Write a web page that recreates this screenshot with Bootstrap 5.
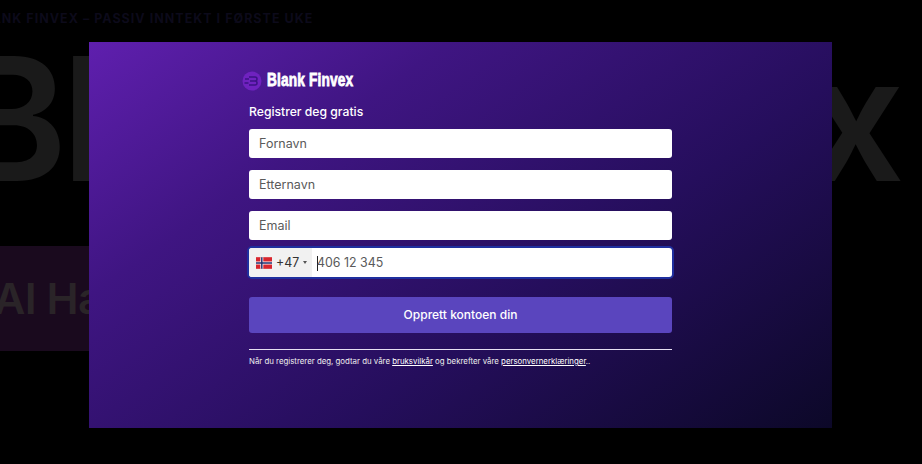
<!DOCTYPE html>
<html lang="no">
<head>
<meta charset="utf-8">
<title>Blank Finvex</title>
<link href="https://cdn.jsdelivr.net/npm/bootstrap@5.3.0/dist/css/bootstrap.min.css" rel="stylesheet">
<style>
html,body{height:100%;margin:0;background:#000;overflow:hidden;font-family:Inter,"Liberation Sans",sans-serif}
.page-bg{height:464px;overflow:hidden;white-space:nowrap}
.top-line{font-size:12.5px;font-weight:700;letter-spacing:1.02px;color:#0c0a1a;margin-left:-26px;padding-top:11px;line-height:16px}
.huge-word{font-size:172px;font-weight:600;line-height:150px;color:#1a1a1a;letter-spacing:-6px;word-spacing:-29px;margin-left:-46px;margin-top:16px;width:1000px}
.promo-band{margin-top:53px;height:105px;width:100px;background:#1a0a1e;color:#2a2428;font-size:43px;font-weight:600;line-height:105px;margin-left:-6px;padding-left:0;letter-spacing:-.5px}
.overlay{position:absolute;inset:0;display:flex;align-items:flex-start;justify-content:center;padding-top:42px}
.reg-modal{width:743px;height:386px;background:linear-gradient(145deg,#5f1fae 0%,#3f1582 28%,#250e5c 62%,#0c0828 100%);margin-right:1px}
.reg-form{width:423px;margin-left:160px;padding-top:29px}
.brand-row{height:19px;gap:5px;margin-left:-7px}
.brand-name{font-family:"Liberation Sans",sans-serif;font-weight:700;font-size:18px;line-height:19px;color:#fff;-webkit-text-stroke:.8px #fff;display:inline-block;transform:scaleX(.76);transform-origin:left center;letter-spacing:.2px;white-space:nowrap}
.reg-title{color:#fff;font-size:12.2px;font-weight:500;line-height:16px;margin:14px 0 9px}
.reg-field.form-control{height:29px;padding:0 10px;border:0;border-radius:3px;font-size:12.5px;color:#555;background:#fff;margin-bottom:12px}
.reg-field::placeholder{color:#5a5a5a;opacity:1}
.phone-box{height:29px;margin-top:-4px;background:#fff;border-radius:3px;box-shadow:0 0 0 2px #1f2f9e;font-size:12.4px;color:#5a5a5a}
.dial-code{background:#f1f1f1;width:63px;padding-left:7px;gap:4px;color:#333;border-radius:3px 0 0 3px}
.dial-num{padding-top:2px}
.caret-mark{border-left:2.5px solid transparent;border-right:2.5px solid transparent;border-top:3px solid #555}
.phone-hint{padding-left:5px;padding-top:2px}
.cursor-bar{width:1px;height:15px;background:#222;margin-right:-1px}
.submit-btn.btn{height:36px;margin-top:20px;background:#5a45be;border:0;border-radius:3px;color:#fff;font-size:12px;font-weight:500;padding:0}
.rule-line{height:1px;background:#e6e0f2;margin-top:16px}
.terms-text{color:#eee;font-size:7.85px;line-height:10px;margin-top:6px}
.terms-text a{color:#fff}
</style>
</head>
<body>
<div class="page-bg">
  <div class="top-line">BLANK FINVEX – PASSIV INNTEKT I FØRSTE UKE</div>
  <div class="huge-word">Blank Finvex</div>
  <div class="promo-band">AI Ha</div>
</div>
<div class="overlay">
  <div class="reg-modal">
    <form class="reg-form">
      <div class="brand-row d-flex align-items-center">
        <svg width="20" height="20" viewBox="0 0 20 20" aria-hidden="true"><circle cx="10" cy="10" r="9.500" fill="#6f22bf"/><path d="M7 6h6a2 2 0 0 1 0 4H8m5 0a2 2 0 0 1 0 4H7M3 8h4M2.500 12h4" fill="none" stroke="#3d1285" stroke-width="1.500"/></svg>
        <span class="brand-name">Blank Finvex</span>
      </div>
      <div class="reg-title">Registrer deg gratis</div>
      <input class="form-control reg-field" placeholder="Fornavn">
      <input class="form-control reg-field" placeholder="Etternavn">
      <input class="form-control reg-field" placeholder="Email">
      <div class="phone-box d-flex align-items-stretch">
        <div class="dial-code d-flex align-items-center">
          <svg width="16" height="12" viewBox="0 0 22 16" aria-hidden="true"><rect width="22" height="16" fill="#d8262e"/><path d="M0 8h22M8 0v16" stroke="#fff" stroke-width="4"/><path d="M0 8h22M8 0v16" stroke="#1f2f6e" stroke-width="2"/></svg>
          <span class="dial-num">+47</span><span class="caret-mark"></span>
        </div>
        <div class="phone-hint d-flex align-items-center"><span class="cursor-bar"></span><span>406 12 345</span></div>
      </div>
      <button type="button" class="btn submit-btn w-100 d-block">Opprett kontoen din</button>
      <div class="rule-line"></div>
      <p class="terms-text mb-0">Når du registrerer deg, godtar du våre <a href="#">bruksvilkår</a> og bekrefter våre <a href="#">personvernerklæringer</a>..</p>
    </form>
  </div>
</div>
</body>
</html>
